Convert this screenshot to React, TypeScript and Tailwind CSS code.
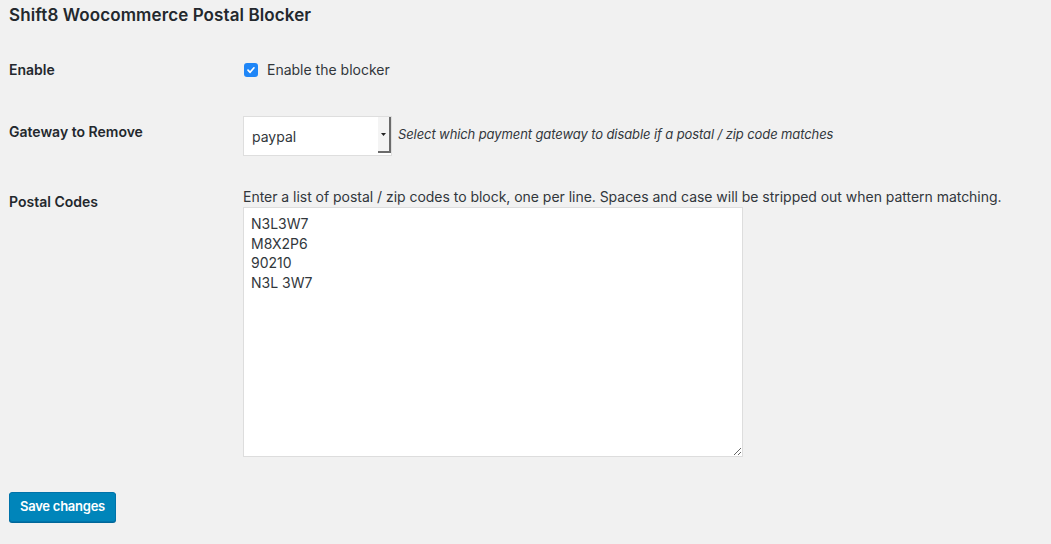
import React from "react";

export default function App() {
  const font = { fontFamily: "Inter, 'Noto Sans', 'Liberation Sans', sans-serif" };
  return (
    <div className="min-h-[544px] w-[1051px] bg-[#f1f1f1] text-[#23282d] pl-[9px]" style={font}>
      <h2 className="pt-[4px] text-[17px] leading-[22px] font-semibold tracking-[0.1px]">
        Shift8 Woocommerce Postal Blocker
      </h2>

      {/* Enable */}
      <div className="mt-[32px] flex h-[24px] items-center">
        <div className="w-[234px] text-[14px] leading-[20px] font-semibold">Enable</div>
        <label className="flex items-center">
          <span className="ml-[1px] flex h-[14px] w-[14px] items-center justify-center rounded-[3px] bg-[#1f86f7] -mt-[1px]">
            <svg width="10" height="10" viewBox="0 0 10 10" fill="none">
              <path d="M2 5.2 L4.1 7.3 L8 2.8" stroke="white" strokeWidth="1.7" strokeLinecap="round" strokeLinejoin="round" />
            </svg>
          </span>
          <span className="ml-[9px] text-[14px] leading-[20px] text-[#32373c] -mt-[1px]">Enable the blocker</span>
        </label>
      </div>

      {/* Gateway */}
      <div className="mt-[34px] flex items-start">
        <div className="mt-[6px] w-[234px] text-[14px] leading-[20px] font-semibold">Gateway to Remove</div>
        <div className="flex h-[40px] w-[149px] border border-[#dedede] bg-white">
          <div className="flex flex-1 items-center pl-[8px] text-[14px] text-[#32373c]">paypal</div>
          <div className="mb-[2px] flex w-[13px] items-center justify-center border-r-2 border-b-2 border-[#6b6b6b] bg-[#f4f4f4]">
            <svg width="5" height="3" viewBox="0 0 5 3">
              <path d="M0 0 L5 0 L2.5 3 Z" fill="#222" />
            </svg>
          </div>
        </div>
        <div className="ml-[6px] mt-[8px] text-[13px] leading-[20px] italic tracking-[-0.1px] text-[#32373c]">
          Select which payment gateway to disable if a postal / zip code matches
        </div>
      </div>

      {/* Postal codes */}
      <div className="mt-[31px] flex items-start">
        <div className="mt-[5px] w-[234px] text-[14px] leading-[20px] font-semibold">Postal Codes</div>
        <div className="flex flex-col">
          <div className="text-[14px] leading-[20px] tracking-[-0.03px] text-[#32373c]">
            Enter a list of postal / zip codes to block, one per line. Spaces and case will be stripped out when pattern matching.
          </div>
          <textarea
            className="h-[250px] w-[500px] border border-[#dddddd] bg-white px-[7px] pt-[6px] text-[14px] leading-[19.5px] text-[#32373c] outline-none"
            style={font}
            defaultValue={"N3L3W7\nM8X2P6\n90210\nN3L 3W7"}
          />
        </div>
      </div>

      <div className="mt-[35px]">
        <button className="h-[30px] rounded-[3px] border border-[#0073aa] bg-[#0085ba] px-[10px] text-[13px] font-semibold tracking-[-0.25px] text-white shadow-[0_1px_0_#006799]">
          Save changes
        </button>
      </div>
    </div>
  );
}
